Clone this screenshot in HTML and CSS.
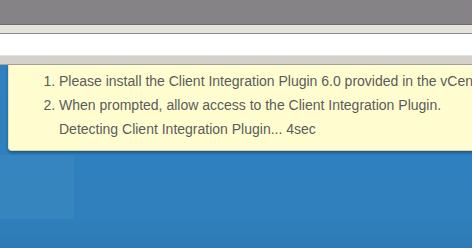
FILE: index.html
```html
<!DOCTYPE html>
<html lang="en">
<head>
    <meta charset="UTF-8">
    <title>Client Integration Plugin</title>
    <link rel="stylesheet" href="styles.css">
</head>
<body>
    <div class="titlebar"></div>
    <div class="toolbar"></div>
    <div class="address"></div>
    <div class="tabs"></div>

    <main class="desk">
        <div class="notice">
            <ol class="steps">
                <li>Please install the Client Integration Plugin 6.0 provided in the vCenter Server installation media.</li>
                <li>When prompted, allow access to the Client Integration Plugin.</li>
            </ol>
            <p class="status">Detecting Client Integration Plugin... 4sec</p>
        </div>
        <div class="tile"></div>
    </main>
</body>
</html>
```

FILE: styles.css
```css
body {
    margin: 0;
    height: 248px;
    overflow: hidden;
    display: flex;
    flex-direction: column;
    font-family: "Liberation Sans", Arial, sans-serif;
}

.titlebar {
    height: 24px;
    background-color: #858385;
    border-bottom: 1px solid #6c6d72;
}

.toolbar {
    height: 8px;
    background-color: #e6e3df;
    border-bottom: 1px solid #8d8987;
}

.address {
    height: 21px;
    background-color: #fff;
    border-bottom: 1px solid #e4e2df;
}

.tabs {
    height: 8px;
    background-color: #d4d0cc;
    border-bottom: 1px solid #a5a3a1;
}

.desk {
    flex: 1;
    background: linear-gradient(#2f80bf 0, #2f80bd 150px, #2e7ab5 183px);
    display: flex;
    flex-direction: column;
}

.notice {
    margin-left: 8px;
    width: 520px;
    padding: 4px 0 9px 50px;
    background-color: #fffdd0;
    border-bottom: 1px solid #d9d39c;
    border-left: 1px solid #e8e3b0;
    border-bottom-left-radius: 4px;
    box-shadow: 0 2px 3px rgba(10, 40, 80, 0.45);
    color: #5b5b5b;
    font-size: 14px;
    line-height: 24px;
    white-space: nowrap;
}

.steps {
    margin: 0;
    padding: 0;
}

.status {
    margin: 0;
}

.tile {
    width: 74px;
    height: 64px;
    margin-top: 4px;
    background-color: rgba(255, 255, 255, 0.04);
}
```
